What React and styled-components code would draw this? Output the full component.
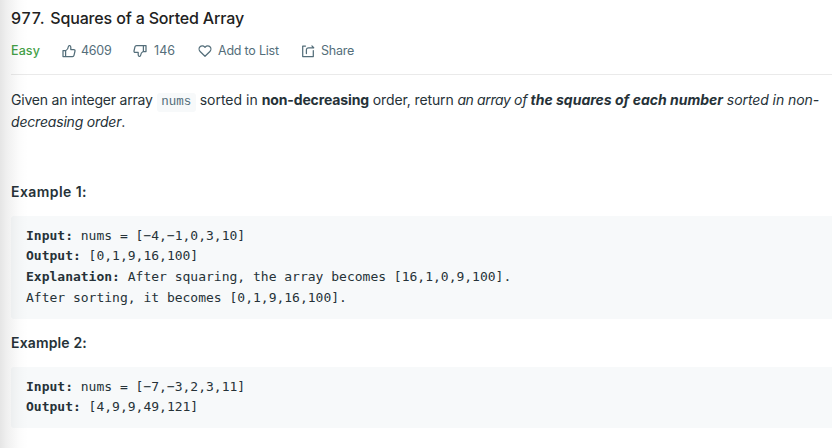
import React from "react";
import styled, { createGlobalStyle } from "styled-components";

const GlobalStyle = createGlobalStyle`
  * { box-sizing: border-box; }
  body { margin: 0; background: #fff; overflow: hidden; }
`;

const Page = styled.main`
  position: relative;
  width: 832px;
  height: 448px;
  padding: 8px 0 0 11px;
  overflow: hidden;
  background: #fff;
  color: #263238;
  font-family: Inter, "Liberation Sans", sans-serif;
  font-size: 14px;
`;

const EdgeShadow = styled.div`
  position: absolute;
  inset: 0 auto 0 0;
  width: 28px;
  pointer-events: none;
  background: linear-gradient(to right, rgba(0, 0, 0, 0.1), rgba(0, 0, 0, 0.06) 25%, rgba(0, 0, 0, 0.015) 65%, transparent);
`;

const Title = styled.h1`
  margin: 0;
  height: 21px;
  line-height: 21px;
  font-size: 16px;
  font-weight: 550;
  letter-spacing: -0.16px;
  color: #212121;
`;

const TitleNumber = styled.span`
  letter-spacing: 0.8px;
`;

const Toolbar = styled.div`
  display: flex;
  align-items: center;
  height: 46px;
  padding-bottom: 1px;
  border-bottom: 1px solid #eaeaea;
  font-size: 12.5px;
  line-height: 18px;
  color: #546e7a;
`;

const Difficulty = styled.span`
  width: 51px;
  color: #43a047;
  font-weight: 500;
  letter-spacing: 0.1px;
`;

const Action = styled.button`
  display: flex;
  align-items: center;
  gap: ${(p) => p.$gap || 6}px;
  width: ${(p) => p.$width}px;
  padding: 0;
  border: 0;
  background: none;
  color: inherit;
  font: inherit;
  letter-spacing: ${(p) => p.$spacing || 0}px;
  white-space: nowrap;
`;

const Icon = styled.svg`
  flex: none;
  width: 14px;
  height: 14px;
  fill: none;
  stroke: currentColor;
  stroke-width: 1.25;
  stroke-linejoin: round;
  stroke-linecap: round;
`;

const Statement = styled.p`
  margin: 14px 0 0;
  height: 44px;
  line-height: 22px;
  white-space: nowrap;
`;

const Run = styled.span`
  font-weight: ${(p) => (p.$bold ? 700 : 400)};
  font-style: ${(p) => (p.$italic ? "italic" : "normal")};
  letter-spacing: ${(p) => p.$spacing || 0}px;
`;

const InlineCode = styled.code`
  margin: 0 4px;
  padding: 2px 4.5px 3px;
  border-radius: 3px;
  background: #f7f9fa;
  color: #546e7a;
  font-family: "Liberation Mono", monospace;
  font-size: 12.5px;
  line-height: 1;
`;

const ExampleTitle = styled.h2`
  margin: ${(p) => p.$top}px 0 0;
  height: 20px;
  line-height: 20px;
  font-size: 14px;
  font-weight: 600;
  letter-spacing: ${(p) => p.$spacing || 0}px;
`;

const CodeBlock = styled.pre`
  margin: 14px 0 0;
  height: ${(p) => p.$height}px;
  padding: 9.6px 15px;
  border-radius: 3px 0 0 3px;
  background: #f7f9fa;
  font: 13px/20.7px "DejaVu Sans Mono", monospace;
`;

const ThumbPath = () => (
  <path d="M1 6.500h2.600v6H1zM3.600 6.700C5.600 5.700 6.300 4.300 6.500 2.200c.1-.9 2.300-.8 2.300 1.100v2.300h3c.8 0 1.400.6 1.200 1.400l-1 4.300c-.2.8-.7 1.200-1.500 1.200H3.600" />
);

export default function App() {
  return (
    <>
      <GlobalStyle />
      <Page>
        <Title><TitleNumber>977. </TitleNumber>Squares of a Sorted Array</Title>
        <Toolbar>
          <Difficulty>Easy</Difficulty>
          <Action $width={71} $gap={5} $spacing={-0.25}>
            <Icon viewBox="0 0 14 14"><ThumbPath /></Icon>4609
          </Action>
          <Action $width={65} $gap={7} $spacing={0.1}>
            <Icon viewBox="0 0 14 14"><g transform="rotate(180 7 7)"><ThumbPath /></g></Icon>146
          </Action>
          <Action $width={103} $spacing={-0.22}>
            <Icon viewBox="0 0 14 14">
              <path d="M7 12.300 2.100 7.500C.8 6.200.8 4 2 2.800c1.300-1.400 3.500-1.300 4.600.1L7 3.400l.4-.5C8.500 1.500 10.700 1.400 12 2.800c1.200 1.200 1.200 3.400-.1 4.700z" />
            </Icon>Add to List
          </Action>
          <Action $width={60} $spacing={-0.22}>
            <Icon viewBox="0 0 14 14">
              <path d="M4.500 2H1.700v10.500h10.600V6.500M5.400 9.500V6c0-1.400.7-2.200 2.200-2.200h5M10.900 1.900l1.800 1.900" />
            </Icon>Share
          </Action>
        </Toolbar>
        <Statement>
          <Run $spacing={-0.21}>Given an integer array</Run>
          <InlineCode>nums</InlineCode>
          <Run>sorted in </Run><Run $bold $spacing={-0.13}>non-decreasing</Run>
          <Run $spacing={-0.12}> order, return </Run>
          <Run $italic $spacing={-0.38}>an array of </Run>
          <Run $bold $italic>the squares of each number</Run>
          <Run $italic $spacing={-0.08}> sorted in non-</Run><br />
          <Run $italic $spacing={-0.19}>decreasing order</Run>.
        </Statement>
        <ExampleTitle $top={49} $spacing={0.43}>Example 1:</ExampleTitle>
        <CodeBlock $height={103}>
          <b>Input:</b>{" nums = [−4,−1,0,3,10]\n"}
          <b>Output:</b>{" [0,1,9,16,100]\n"}
          <b>Explanation:</b>{" After squaring, the array becomes [16,1,0,9,100].\nAfter sorting, it becomes [0,1,9,16,100]."}
        </CodeBlock>
        <ExampleTitle $top={14} $spacing={0.15}>Example 2:</ExampleTitle>
        <CodeBlock $height={61}>
          <b>Input:</b>{" nums = [−7,−3,2,3,11]\n"}
          <b>Output:</b>{" [4,9,9,49,121]"}
        </CodeBlock>
        <EdgeShadow />
      </Page>
    </>
  );
}
